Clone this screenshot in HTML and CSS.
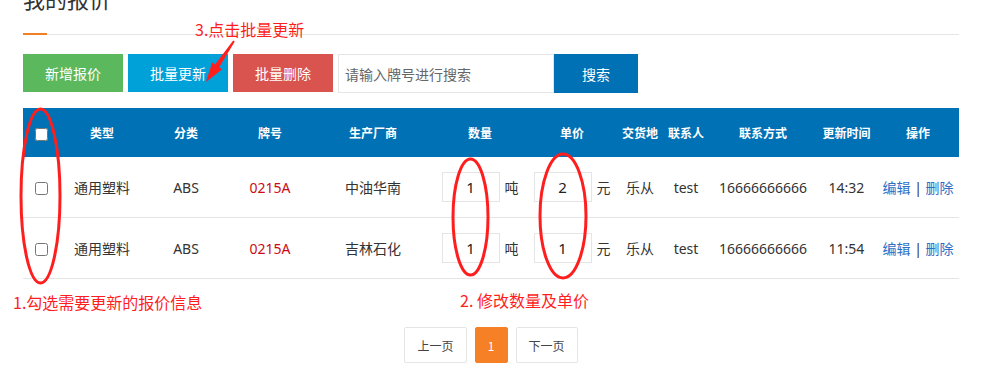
FILE: index.html
```html
<!DOCTYPE html>
<html lang="zh-CN">
<head>
<meta charset="utf-8">
<title>我的报价</title>
<link rel="stylesheet" href="styles.css">
</head>
<body>
<div class="page">
  <div class="page-head">
    <h1 class="title">我的报价</h1>
  </div>

  <div class="toolbar">
    <button class="btn btn-green">新增报价</button>
    <button class="btn btn-blue">批量更新</button>
    <button class="btn btn-red">批量删除</button>
    <div class="search">
      <input class="search-input" type="text" placeholder="请输入牌号进行搜索">
      <button class="btn btn-search">搜索</button>
    </div>
  </div>

  <table class="grid">
    <colgroup>
      <col class="c-check"><col class="c-type"><col class="c-cat"><col class="c-no"><col class="c-maker">
      <col class="c-qty"><col class="c-price"><col class="c-place"><col class="c-person"><col class="c-phone">
      <col class="c-time"><col class="c-op">
    </colgroup>
    <thead>
      <tr>
        <th><input type="checkbox" class="chk"></th>
        <th>类型</th><th>分类</th><th>牌号</th><th>生产厂商</th><th>数量</th><th>单价</th>
        <th>交货地</th><th>联系人</th><th>联系方式</th><th>更新时间</th><th>操作</th>
      </tr>
    </thead>
    <tbody>
      <tr>
        <td><input type="checkbox" class="chk"></td>
        <td>通用塑料</td><td>ABS</td><td class="red">0215A</td><td>中油华南</td>
        <td><span class="field"><input class="num" type="text" value="1">吨</span></td>
        <td><span class="field"><input class="num" type="text" value="2">元</span></td>
        <td>乐从</td><td>test</td><td>16666666666</td><td>14:32</td>
        <td><a class="link">编辑</a> | <a class="link">删除</a></td>
      </tr>
      <tr>
        <td><input type="checkbox" class="chk"></td>
        <td>通用塑料</td><td>ABS</td><td class="red">0215A</td><td>吉林石化</td>
        <td><span class="field"><input class="num" type="text" value="1">吨</span></td>
        <td><span class="field"><input class="num" type="text" value="1">元</span></td>
        <td>乐从</td><td>test</td><td>16666666666</td><td>11:54</td>
        <td><a class="link">编辑</a> | <a class="link">删除</a></td>
      </tr>
    </tbody>
  </table>

  <div class="pager">
    <a class="pg">上一页</a>
    <a class="pg pg-on">1</a>
    <a class="pg">下一页</a>
  </div>
</div>

<svg class="marks" width="986" height="376" viewBox="0 0 986 376">
  <ellipse cx="40.5" cy="196" rx="19.5" ry="87" fill="none" stroke="#ff1e1e" stroke-width="3"/>
  <ellipse cx="470.5" cy="217" rx="17.5" ry="58" fill="none" stroke="#ff1e1e" stroke-width="3"/>
  <ellipse cx="563" cy="216" rx="23" ry="62" fill="none" stroke="#ff1e1e" stroke-width="3"/>
  <polygon points="233.2,40.4 234.8,41.6 219.2,67.2 222.1,69.2 206,82 212.1,62.4 215,64.4" fill="#ff1e1e"/>
</svg>
<span class="note note-3">3.点击批量更新</span>
<span class="note note-1">1.勾选需要更新的报价信息</span>
<span class="note note-2">2. 修改数量及单价</span>
</body>
</html>
```

FILE: styles.css
```css
html, body {
  margin: 0;
  padding: 0;
  background: #fff;
}
body {
  position: relative;
  width: 986px;
  height: 376px;
  overflow: hidden;
  font-family: "Noto Sans", "Noto Sans CJK SC", sans-serif;
  font-size: 14px;
  color: #333;
}
.page {
  width: 936px;
  margin-left: 23px;
}
.page-head {
  display: flex;
  align-items: flex-start;
  height: 34px;
  border-bottom: 1px solid #e5e5e5;
  position: relative;
}
.page-head::after {
  content: "";
  position: absolute;
  left: 0;
  bottom: -1px;
  width: 24px;
  height: 2px;
  background: #f28023;
}
.title {
  margin: -13px 0 0 0;
  font-size: 22px;
  line-height: 22px;
  font-weight: normal;
  color: #333;
  font-family: "Noto Sans CJK SC", sans-serif;
}
.toolbar {
  display: flex;
  gap: 5px;
  margin-top: 19px;
  height: 39px;
}
.btn {
  border: 0;
  padding: 0;
  margin: 0;
  width: 100px;
  height: 38px;
  color: #fff;
  font-family: "Noto Sans CJK SC", sans-serif;
  font-size: 14px;
}
.btn-green { background: #5cb85c; }
.btn-blue { background: #00a0d9; }
.btn-red { background: #d9534f; }
.search {
  display: flex;
}
.search-input {
  box-sizing: border-box;
  width: 216px;
  height: 39px;
  border: 1px solid #e5e5e5;
  padding: 0 0 0 6px;
  margin: 0;
  font-family: "Noto Sans CJK SC", sans-serif;
  font-size: 14px;
  outline: none;
}
.search-input::placeholder { color: #666; }
.btn-search {
  width: 84px;
  height: 39px;
  background: #0071b4;
}
.grid {
  margin-top: 15px;
  width: 936px;
  table-layout: fixed;
  border-collapse: separate;
  border-spacing: 0;
}
.c-check { width: 37px; }
.c-type, .c-cat, .c-no { width: 84px; }
.c-maker { width: 122px; }
.c-qty, .c-price { width: 92px; }
.c-place { width: 44px; }
.c-person { width: 48px; }
.c-phone { width: 106px; }
.c-time { width: 61px; }
.c-op { width: 82px; }
.grid th {
  background: #0071b4;
  color: #fff;
  height: 49px;
  padding: 0;
  font-size: 12px;
  font-weight: bold;
  text-align: center;
  vertical-align: middle;
  white-space: nowrap;
  font-family: "Noto Sans CJK SC", sans-serif;
}
.grid td {
  height: 60px;
  padding: 0;
  border-bottom: 1px solid #e5e5e5;
  text-align: center;
  vertical-align: middle;
  white-space: nowrap;
}
.chk {
  margin: 0;
  width: 13px;
  height: 13px;
  vertical-align: middle;
}
.red { color: #cc0a14; }
.field {
  display: inline-flex;
  align-items: center;
  gap: 5px;
}
.num {
  box-sizing: border-box;
  width: 58px;
  height: 30px;
  border: 1px solid #e5e5e5;
  margin: 0;
  padding: 0;
  text-align: center;
  font-family: "Noto Sans", sans-serif;
  font-size: 15px;
  color: #222;
  outline: none;
}
.link {
  color: #2c6ec4;
  text-decoration: none;
}
.pager {
  display: flex;
  justify-content: center;
  gap: 8px;
  margin-top: 48px;
}
.pg {
  box-sizing: border-box;
  height: 36px;
  padding: 0 12px;
  min-width: 33px;
  border: 1px solid #e5e5e5;
  border-radius: 2px;
  display: flex;
  align-items: center;
  justify-content: center;
  font-size: 12px;
  color: #444;
  font-family: "Noto Sans CJK SC", sans-serif;
  background: #fff;
}
.pg-on {
  background: #f58025;
  border-color: #f58025;
  color: #fff;
  padding: 0;
  width: 33px;
}
.marks {
  position: absolute;
  left: 0;
  top: 0;
  pointer-events: none;
}
.note {
  position: absolute;
  color: #ff1e1e;
  font-size: 16px;
  line-height: 16px;
  white-space: nowrap;
  font-family: "Noto Sans CJK SC", sans-serif;
}
.note-3 { left: 195px; top: 21px; }
.note-1 { left: 13px; top: 294px; }
.note-2 { left: 460px; top: 292px; }
```
